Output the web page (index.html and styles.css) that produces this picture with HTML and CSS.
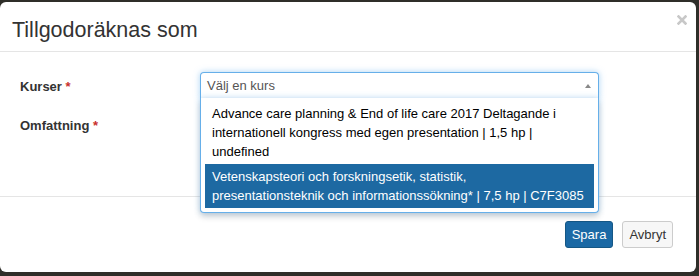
FILE: index.html
```html
<!DOCTYPE html>
<html lang="sv">
<head>
<meta charset="utf-8">
<title>Tillgodoräknas som</title>
<link rel="stylesheet" href="styles.css">
</head>
<body>
<div class="modal">
  <div class="modal-header">
    <h4 class="modal-title">Tillgodoräknas som</h4>
    <svg class="close" width="10" height="10" viewBox="0 0 10 10" aria-label="Stäng">
      <path d="M1.5 1.5 L8.5 8.5 M8.5 1.5 L1.5 8.5" stroke="#c8c8c8" stroke-width="2.6" stroke-linecap="square"/>
    </svg>
  </div>
  <div class="modal-body">
    <div class="form-row">
      <label class="label">Kurser <span class="req">*</span></label>
      <div class="select2">
        <div class="chosen">
          <span class="placeholder">Välj en kurs</span>
          <span class="arrow"></span>
        </div>
        <div class="dropdown">
          <ul class="results">
            <li class="result">Advance care planning &amp; End of life care 2017 Deltagande i internationell kongress med egen presentation | 1,5 hp | undefined</li>
            <li class="result highlighted">Vetenskapsteori och forskningsetik, statistik,<br>presentationsteknik och informationssökning* | 7,5 hp | C7F3085</li>
          </ul>
        </div>
      </div>
    </div>
    <div class="form-row">
      <label class="label">Omfattning <span class="req">*</span></label>
      <div class="input"></div>
    </div>
  </div>
  <div class="modal-footer">
    <button class="btn btn-primary">Spara</button>
    <button class="btn btn-default">Avbryt</button>
  </div>
</div>
</body>
</html>
```
FILE: styles.css
```css
html, body {
  margin: 0;
  padding: 0;
}
body {
  background: #2f2e29;
  width: 699px;
  height: 276px;
  overflow: hidden;
  font-family: "Liberation Sans", Arial, sans-serif;
  font-size: 13px;
  color: #333;
}
.modal {
  margin-top: 2px;
  width: 696px;
  height: 270px;
  background: #fff;
  border-radius: 6px;
  display: flex;
  flex-direction: column;
}
.modal-header {
  display: flex;
  justify-content: space-between;
  align-items: flex-start;
  padding: 11px 9px 0 12px;
  height: 50px;
  box-sizing: border-box;
  border-bottom: 1px solid #e5e5e5;
}
.modal-title {
  margin: 5px 0 0 0;
  font-size: 21.5px;
  line-height: 25px;
  font-weight: normal;
  color: #333;
}
.close {
  margin-top: 2px;
  display: block;
}
.modal-body {
  flex: 1;
  padding: 20px 0 0 20px;
}
.form-row {
  display: grid;
  grid-template-columns: 180px 399px;
  margin-bottom: 13px;
}
.label {
  font-weight: bold;
  padding-top: 7px;
  line-height: 15px;
  color: #333;
}
.req {
  color: #c9302c;
}
.select2 {
  position: relative;
  height: 26px;
}
.chosen {
  height: 26px;
  box-sizing: border-box;
  border: 1px solid #66afe9;
  border-bottom: 0;
  border-radius: 4px 4px 0 0;
  display: flex;
  justify-content: space-between;
  align-items: center;
  padding: 0 7px 0 6px;
  line-height: 24px;
  box-shadow: 0 0 6px rgba(102, 175, 233, 0.55);
  background: #fff;
}
.placeholder {
  color: #555;
}
.arrow {
  width: 0;
  height: 0;
  border-left: 3.5px solid transparent;
  border-right: 3.5px solid transparent;
  border-bottom: 4px solid #888;
}
.dropdown {
  position: absolute;
  top: 26px;
  left: 0;
  width: 399px;
  box-sizing: border-box;
  background: #fff;
  border: 1px solid #66afe9;
  border-top: 0;
  border-radius: 0 0 4px 4px;
  box-shadow: 0 4px 6px rgba(0, 0, 0, 0.15), 0 0 6px rgba(102, 175, 233, 0.45);
  z-index: 5;
}
.results {
  list-style: none;
  margin: 3px 4px 4px 4px;
  padding: 0;
}
.result {
  padding: 3px 7px;
  line-height: 19px;
  color: #000;
}
.result.highlighted {
  background: #1d69a2;
  color: #fff;
}
.input {
  height: 26px;
  box-sizing: border-box;
  border: 1px solid #ccc;
  border-radius: 4px;
}
.modal-footer {
  border-top: 1px solid #e5e5e5;
  padding: 24px 23px 24px 0;
  display: flex;
  justify-content: flex-end;
  gap: 9px;
}
.btn {
  font-family: "Liberation Sans", Arial, sans-serif;
  font-size: 13px;
  line-height: 15px;
  padding: 5px 6px;
  border-radius: 3px;
  border: 1px solid;
  margin: 0;
}
.btn-primary {
  background: #1b69a5;
  border-color: #155785;
  color: #fff;
}
.btn-default {
  background: #f7f7f7;
  border-color: #ccc;
  color: #333;
}
```
